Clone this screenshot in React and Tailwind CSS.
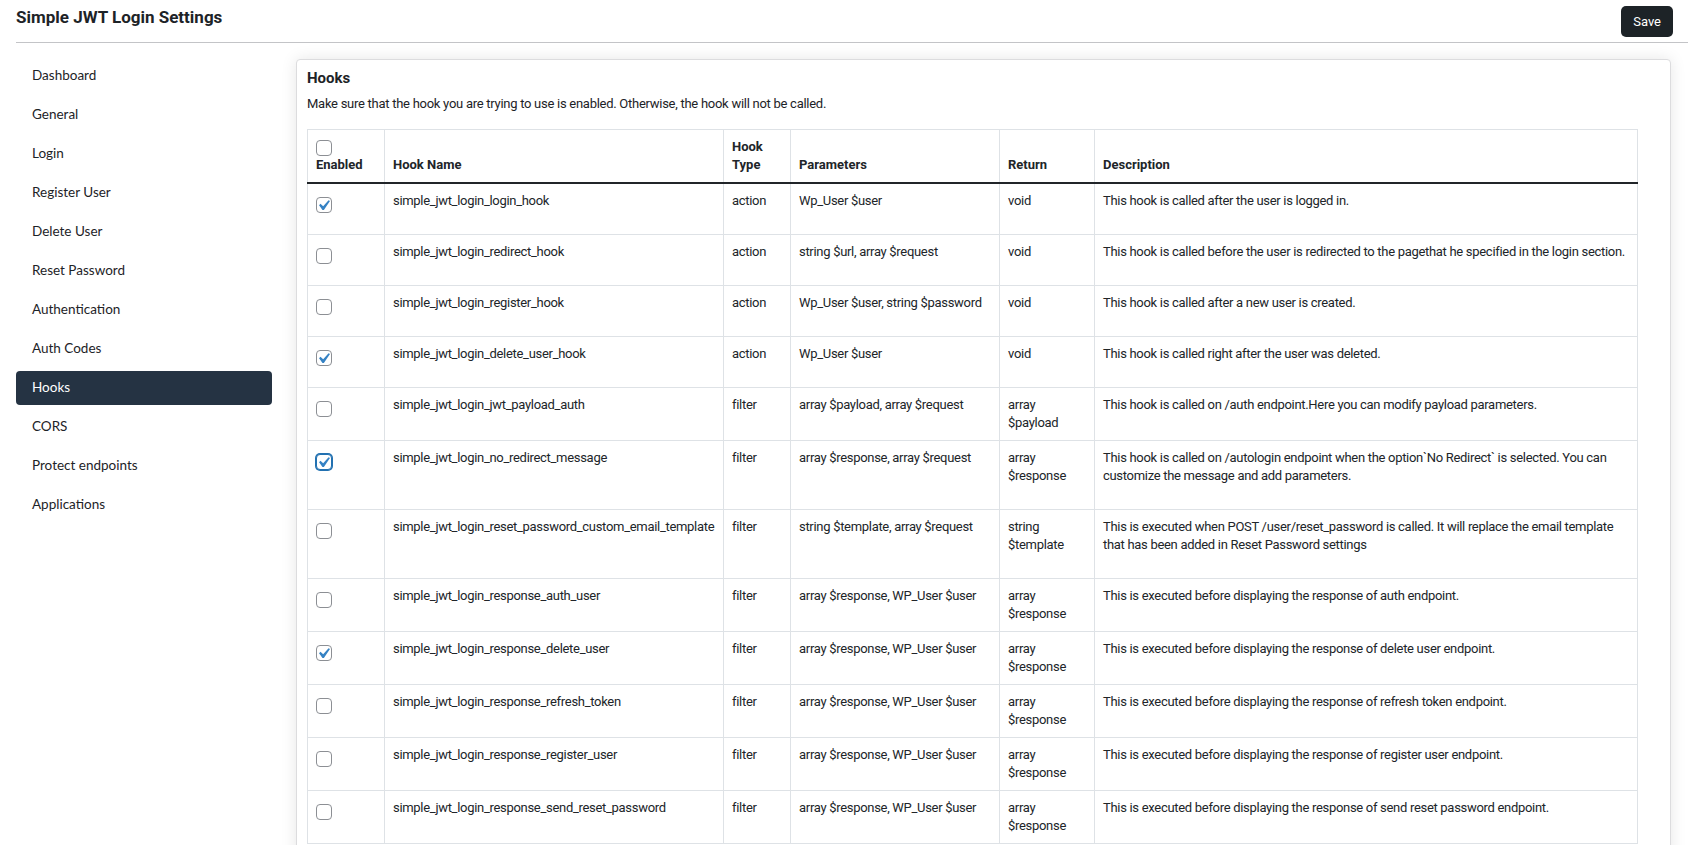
import clsx from "clsx";

const menu = [
  "Dashboard",
  "General",
  "Login",
  "Register User",
  "Delete User",
  "Reset Password",
  "Authentication",
  "Auth Codes",
  "Hooks",
  "CORS",
  "Protect endpoints",
  "Applications",
];

const hooks = [
  { on: true, name: "simple_jwt_login_login_hook", type: "action", params: "Wp_User $user", ret: "void", desc: ["This hook is called after the user is logged in."] },
  { on: false, name: "simple_jwt_login_redirect_hook", type: "action", params: "string $url, array $request", ret: "void", desc: ["This hook is called before the user is redirected to the pagethat he specified in the login section."] },
  { on: false, name: "simple_jwt_login_register_hook", type: "action", params: "Wp_User $user, string $password", ret: "void", desc: ["This hook is called after a new user is created."] },
  { on: true, name: "simple_jwt_login_delete_user_hook", type: "action", params: "Wp_User $user", ret: "void", desc: ["This hook is called right after the user was deleted."] },
  { on: false, name: "simple_jwt_login_jwt_payload_auth", type: "filter", params: "array $payload, array $request", ret: "array $payload", desc: ["This hook is called on /auth endpoint.Here you can modify payload parameters."] },
  { on: true, focus: true, name: "simple_jwt_login_no_redirect_message", type: "filter", params: "array $response, array $request", ret: "array $response", desc: ["This hook is called on /autologin endpoint when the option`No Redirect` is selected. You can", "customize the message and add parameters."] },
  { on: false, name: "simple_jwt_login_reset_password_custom_email_template", type: "filter", params: "string $template, array $request", ret: "string $template", desc: ["This is executed when POST /user/reset_password is called. It will replace the email template", "that has been added in Reset Password settings"] },
  { on: false, name: "simple_jwt_login_response_auth_user", type: "filter", params: "array $response, WP_User $user", ret: "array $response", desc: ["This is executed before displaying the response of auth endpoint."] },
  { on: true, name: "simple_jwt_login_response_delete_user", type: "filter", params: "array $response, WP_User $user", ret: "array $response", desc: ["This is executed before displaying the response of delete user endpoint."] },
  { on: false, name: "simple_jwt_login_response_refresh_token", type: "filter", params: "array $response, WP_User $user", ret: "array $response", desc: ["This is executed before displaying the response of refresh token endpoint."] },
  { on: false, name: "simple_jwt_login_response_register_user", type: "filter", params: "array $response, WP_User $user", ret: "array $response", desc: ["This is executed before displaying the response of register user endpoint."] },
  { on: false, name: "simple_jwt_login_response_send_reset_password", type: "filter", params: "array $response, WP_User $user", ret: "array $response", desc: ["This is executed before displaying the response of send reset password endpoint."] },
];

function Checkbox({ checked, focus }) {
  return (
    <span
      className={clsx(
        "relative inline-block w-4 h-4 rounded-[4px] bg-white border align-top",
        focus ? "border-[#2271b1] shadow-[0_0_0_1px_#2271b1]" : "border-[#8c8f94]"
      )}
    >
      {checked && (
        <svg viewBox="0 0 20 20" className="absolute -left-[4px] -top-[3px] w-[21px] h-[21px]">
          <path d="M14.83 4.89l1.34.94-5.81 8.38H9.02L5.78 9.67l1.34-1.25 2.57 2.4z" fill="#3582c4" />
        </svg>
      )}
    </span>
  );
}

export default function App() {
  const th = "border border-[#dee2e6] border-b-2 border-b-[#212529] px-2 py-2 align-bottom text-left font-bold";
  const td = "border border-[#dee2e6] px-2 py-2 align-top tracking-[-0.3px]";

  return (
    <div className="min-h-screen bg-white text-[#1d2327] font-['Roboto',sans-serif]">
      <header className="ml-4 flex items-start justify-between border-b border-[#c3c4c7] h-[43px] pr-[15px]">
        <h1 className="mt-[7px] text-[17px] leading-5 font-bold">Simple JWT Login Settings</h1>
        <button className="mt-[6px] h-[31px] px-[12px] rounded-[5px] bg-[#1d2327] text-white text-[13px]">Save</button>
      </header>

      <div className="flex gap-6 pt-4 pl-4 pr-[17px]">
        <nav className="w-64 shrink-0 border-b border-[#dcdcde] pb-[5px] font-['Lato',sans-serif]">
          <ul className="flex flex-col gap-[5px]">
            {menu.map((item) => (
              <li
                key={item}
                className={clsx(
                  "h-[34px] flex items-center pl-4 pb-[2px] rounded-[4px] text-[13.5px]",
                  item === "Hooks" ? "bg-[#253343] text-white" : "text-[#1d2327]"
                )}
              >
                {item}
              </li>
            ))}
          </ul>
        </nav>

        <main className="flex-1 self-start border border-[#dcdcde] rounded-[4px] bg-white px-[10px] pt-[8px] pb-4 shadow-[0_0_16px_rgba(0,0,0,0.1)]">
          <h2 className="text-[15px] leading-5 font-bold">Hooks</h2>
          <p className="mt-[7px] mb-4 text-[13px] leading-[18px] tracking-[-0.27px]">
            Make sure that the hook you are trying to use is enabled. Otherwise, the hook will not be called.
          </p>

          <table className="table-fixed border-collapse w-[1330px] text-[13px] leading-[18px] text-[#212529]">
            <colgroup>
              <col className="w-[77px]" />
              <col className="w-[339px]" />
              <col className="w-[67px]" />
              <col className="w-[209px]" />
              <col className="w-[95px]" />
              <col className="w-[543px]" />
            </colgroup>
            <thead>
              <tr>
                <th className={th}>
                  <div className="h-[18px] pt-[2px]">
                    <Checkbox />
                  </div>
                  <div>Enabled</div>
                </th>
                <th className={th}>Hook Name</th>
                <th className={th}>Hook Type</th>
                <th className={th}>Parameters</th>
                <th className={th}>Return</th>
                <th className={th}>Description</th>
              </tr>
            </thead>
            <tbody>
              {hooks.map((h) => (
                <tr key={h.name}>
                  <td className={td}>
                    <div className="pt-[5px]">
                      <Checkbox checked={h.on} focus={h.focus} />
                    </div>
                  </td>
                  <td className={clsx(td, "whitespace-nowrap")}>{h.name}</td>
                  <td className={td}>{h.type}</td>
                  <td className={clsx(td, "whitespace-nowrap")}>{h.params}</td>
                  <td className={td}>{h.ret}</td>
                  <td className={td}>
                    <p className="mb-4 whitespace-nowrap">
                      {h.desc.map((line, i) => (
                        <span key={i} className="block">{line}</span>
                      ))}
                    </p>
                  </td>
                </tr>
              ))}
            </tbody>
          </table>
        </main>
      </div>
    </div>
  );
}
